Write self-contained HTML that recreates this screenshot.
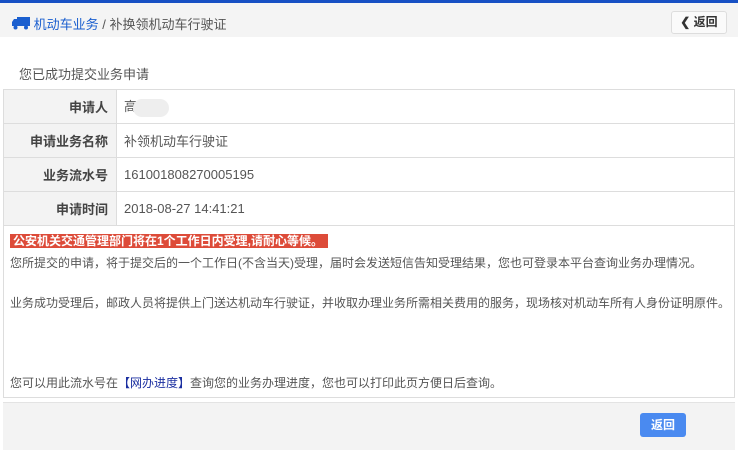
<!DOCTYPE html>
<html><head><meta charset="utf-8"><style>
*{margin:0;padding:0;box-sizing:border-box}
body{width:738px;height:450px;background:#fff;font-family:"Liberation Sans","Noto Sans CJK SC",sans-serif;font-size:12px;color:#555;position:relative;overflow:hidden}
.top{position:absolute;left:0;top:0;width:738px;height:3px;background:#1750c4}
.hdr{position:absolute;left:0;top:3px;width:738px;height:34px;background:#f4f4f4}
.crumb{position:absolute;left:12px;top:11px;font-size:13px;color:#555;white-space:nowrap}
.crumb a{color:#1b5fcf}
.back{position:absolute;left:671px;top:8px;width:56px;height:23px;border:1px solid #ddd;border-radius:3px;background:#fafafa;font-size:12px;font-weight:bold;color:#333;text-align:center;line-height:21px}
.title{position:absolute;left:19px;top:64px;font-size:13px;color:#555}
table{position:absolute;left:3px;top:89px;width:732px;border-collapse:collapse}
td{border:1px solid #ddd;height:34px;font-size:13px}
td.l{width:113px;background:#f3f3f3;text-align:right;padding-right:8px;font-weight:bold;color:#444}
td.v{padding-left:7px;color:#555}
.msg{position:absolute;left:3px;top:224px;width:732px;height:174px;border:1px solid #ddd;border-top:none}
.red{position:absolute;left:6px;top:10px;width:318px;height:14px;background:#dd4b39;color:#fff;font-weight:bold;font-size:12px;line-height:14px;padding-left:3px;white-space:nowrap}
.ln{position:absolute;left:6px;font-size:12px;white-space:nowrap;color:#555}
.foot{position:absolute;left:3px;top:402px;width:732px;height:48px;background:#f3f3f3;border-top:1px solid #e3e3e3}
.btn{position:absolute;left:637px;top:10px;width:46px;height:24px;background:#4a8af0;border-radius:3px;color:#fff;font-weight:bold;text-align:center;line-height:24px;font-size:12px}
.blur{display:inline-block;width:36px;height:18px;border-radius:9px;background:#eee;vertical-align:middle;margin-left:-4px}
</style></head><body>
<div class="top"></div>
<div class="hdr">
<div class="crumb"><svg width="18" height="13" viewBox="0 0 18 13" style="vertical-align:-1px"><rect x="5" y="0" width="13" height="9" fill="#1b5fcf"/><path d="M0 5 L2 2 H5 V9 H0Z" fill="#1b5fcf"/><circle cx="3.5" cy="10.5" r="2" fill="#1b5fcf"/><circle cx="14" cy="10.5" r="2" fill="#1b5fcf"/></svg> <a>机动车业务</a> / 补换领机动车行驶证</div>
<div class="back">❮ 返回</div>
</div>
<div class="title">您已成功提交业务申请</div>
<table>
<tr><td class="l">申请人</td><td class="v">高<span class="blur"></span></td></tr>
<tr><td class="l">申请业务名称</td><td class="v">补领机动车行驶证</td></tr>
<tr><td class="l">业务流水号</td><td class="v">161001808270005195</td></tr>
<tr><td class="l">申请时间</td><td class="v">2018-08-27 14:41:21</td></tr>
</table>
<div class="msg">
<div class="red">公安机关交通管理部门将在1个工作日内受理,请耐心等候。</div>
<div class="ln" style="top:30px">您所提交的申请，将于提交后的一个工作日(不含当天)受理，届时会发送短信告知受理结果，您也可登录本平台查询业务办理情况。</div>
<div class="ln" style="top:70px">业务成功受理后，邮政人员将提供上门送达机动车行驶证，并收取办理业务所需相关费用的服务，现场核对机动车所有人身份证明原件。</div>
<div class="ln" style="top:150px">您可以用此流水号在<span style="color:#1b2fa0">【网办进度】</span>查询您的业务办理进度，您也可以打印此页方便日后查询。</div>
</div>
<div class="foot"><div class="btn">返回</div></div>
</body></html>
